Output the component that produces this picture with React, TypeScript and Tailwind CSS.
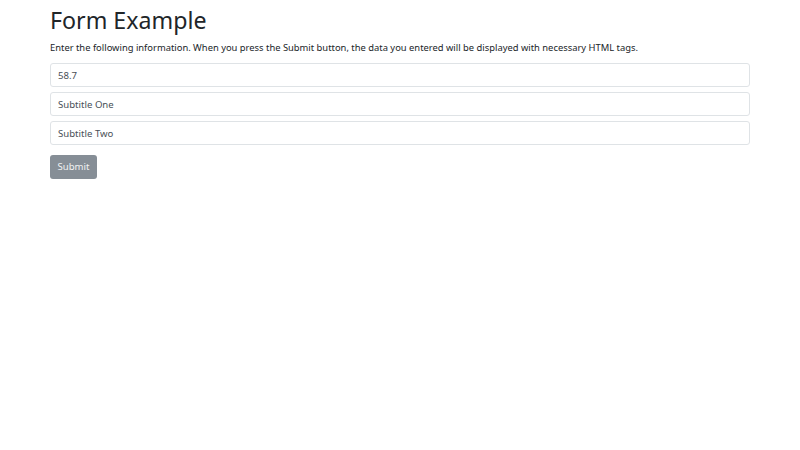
export default function App() {
    return (
        <div className="min-h-[450px] w-[800px] bg-white text-[#212529]" style={{ fontFamily: '"Noto Sans", "Open Sans", sans-serif' }}>
            <div className="mx-auto w-[700px] pt-[5px]">
                <h1 className="text-[23.2px] leading-[30px] font-normal">Form Example</h1>
                <p className="mt-[5px] text-[9.4px] leading-[15px]">
                    Enter the following information. When you press the Submit button, the data you entered will be displayed with necessary HTML tags.
                </p>
                <form className="mt-[8px] flex flex-col gap-[5px]">
                    <input
                        className="h-[24px] w-full rounded-[3px] border border-[#dfe3e6] px-[7px] text-[9.6px] text-[#495057] outline-none"
                        defaultValue="58.7"
                    />
                    <input
                        className="h-[24px] w-full rounded-[3px] border border-[#dfe3e6] px-[7px] text-[9.6px] text-[#495057] outline-none"
                        defaultValue="Subtitle One"
                    />
                    <input
                        className="h-[24px] w-full rounded-[3px] border border-[#dfe3e6] px-[7px] text-[9.6px] text-[#495057] outline-none"
                        defaultValue="Subtitle Two"
                    />
                    <div className="mt-[5px] flex">
                        <button
                            type="button"
                            className="h-[24px] w-[47px] rounded-[3px] bg-[#868e96] text-[9.6px] text-[#f1f2f3]"
                        >
                            Submit
                        </button>
                    </div>
                </form>
            </div>
        </div>
    );
}
